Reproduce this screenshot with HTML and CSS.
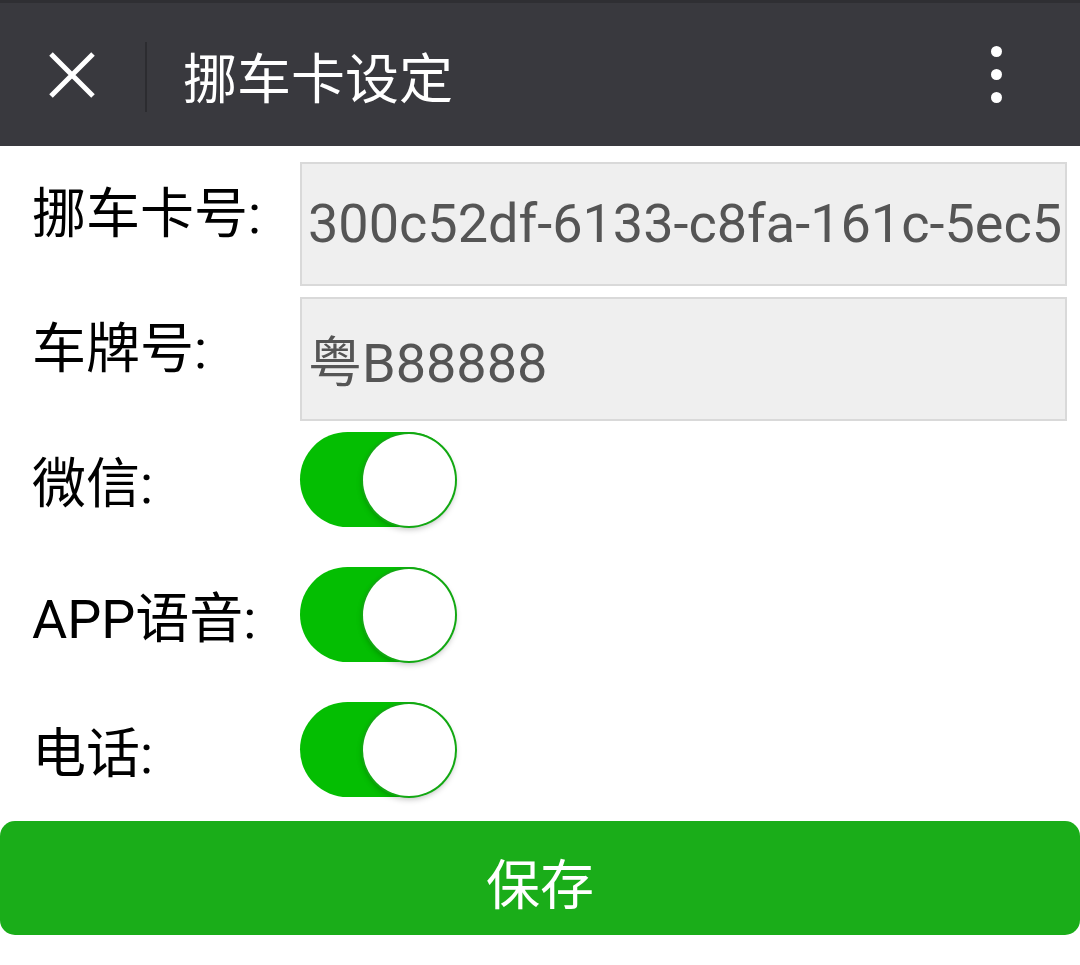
FILE: index.html
```html
<!DOCTYPE html>
<html lang="zh-CN">
<head>
<meta charset="utf-8">
<title>挪车卡设定</title>
<link rel="stylesheet" href="styles.css">
</head>
<body>
<header class="topbar">
  <div class="close-btn">
    <svg width="48" height="48" viewBox="0 0 48 48"><path d="M3 3 L45 45 M45 3 L3 45" stroke="#fff" stroke-width="5" stroke-linecap="butt" fill="none"/></svg>
  </div>
  <div class="divider"></div>
  <h1 class="title">挪车卡设定</h1>
  <div class="more">
    <span class="dot"></span><span class="dot"></span><span class="dot"></span>
  </div>
</header>
<main class="form">
  <div class="row">
    <label class="label">挪车卡号:</label>
    <div class="field">300c52df-6133-c8fa-161c-5ec5</div>
  </div>
  <div class="row">
    <label class="label">车牌号:</label>
    <div class="field">粤B88888</div>
  </div>
  <div class="row toggle-row">
    <label class="label">微信:</label>
    <div class="switch"><span class="knob"></span></div>
  </div>
  <div class="row toggle-row">
    <label class="label">APP语音:</label>
    <div class="switch"><span class="knob"></span></div>
  </div>
  <div class="row toggle-row last">
    <label class="label">电话:</label>
    <div class="switch"><span class="knob"></span></div>
  </div>
  <button class="save-btn">保存</button>
</main>
</body>
</html>
```
FILE: styles.css
```css
* { box-sizing: border-box; }
html, body { margin: 0; padding: 0; background: #fff; }
body {
  width: 1080px;
  font-family: Roboto, "Noto Sans CJK SC", sans-serif;
}
.topbar {
  height: 146px;
  background: #39393e;
  border-top: 3px solid #2f2f33;
  display: flex;
  align-items: center;
}
.close-btn {
  width: 145px;
  display: flex;
  justify-content: center;
  align-items: center;
  padding-right: 2px;
  padding-top: 1px;
}
.close-btn svg { display: block; }
.divider {
  width: 2px;
  height: 70px;
  background: #2c2c30;
  margin-top: 4px;
}
.title {
  margin: 0 0 0 36px;
  font-family: "Noto Sans CJK SC", sans-serif;
  font-weight: 400;
  font-size: 54px;
  line-height: 1;
  color: #fff;
  flex: 1;
  padding-top: 2px;
}
.more {
  width: 12px;
  margin-right: 78px;
  display: flex;
  flex-direction: column;
  align-items: center;
  gap: 12px;
}
.dot {
  width: 11px;
  height: 11px;
  border-radius: 50%;
  background: #fff;
}
.form {
  padding-top: 16px;
  display: flex;
  flex-direction: column;
  gap: 11px;
}
.row {
  display: flex;
  align-items: flex-start;
  height: 124px;
}
.row.last { height: 108px; }
.label {
  width: 300px;
  padding-left: 32px;
  padding-top: 26px;
  font-family: Roboto, "Noto Sans CJK SC", sans-serif;
  font-size: 54px;
  line-height: 54px;
  color: #000;
  white-space: nowrap;
}
.field {
  width: 767px;
  height: 124px;
  background: #efefef;
  border: 2px solid #d9d9d9;
  padding: 0 0 2px 6px;
  display: flex;
  align-items: center;
  font-family: Roboto, "Noto Sans CJK SC", sans-serif;
  font-size: 54px;
  color: #555555;
  white-space: nowrap;
  overflow: hidden;
}
.switch {
  width: 156px;
  height: 95px;
  border-radius: 48px;
  background: #04be02;
  display: flex;
  justify-content: flex-end;
  align-items: center;
  padding: 0 1px;
}
.knob {
  width: 92px;
  height: 92px;
  border-radius: 50%;
  background: #fff;
  box-shadow: 0 0 0 2px #12a812, 0 3px 6px rgba(0, 0, 0, 0.28);
}
.save-btn {
  width: 1080px;
  height: 114px;
  margin: 0;
  border: none;
  border-radius: 15px;
  background: #1aad19;
  color: #fff;
  font-family: "Noto Sans CJK SC", sans-serif;
  font-size: 54px;
  line-height: 1;
  padding: 8px 0 0 0;
}
```
